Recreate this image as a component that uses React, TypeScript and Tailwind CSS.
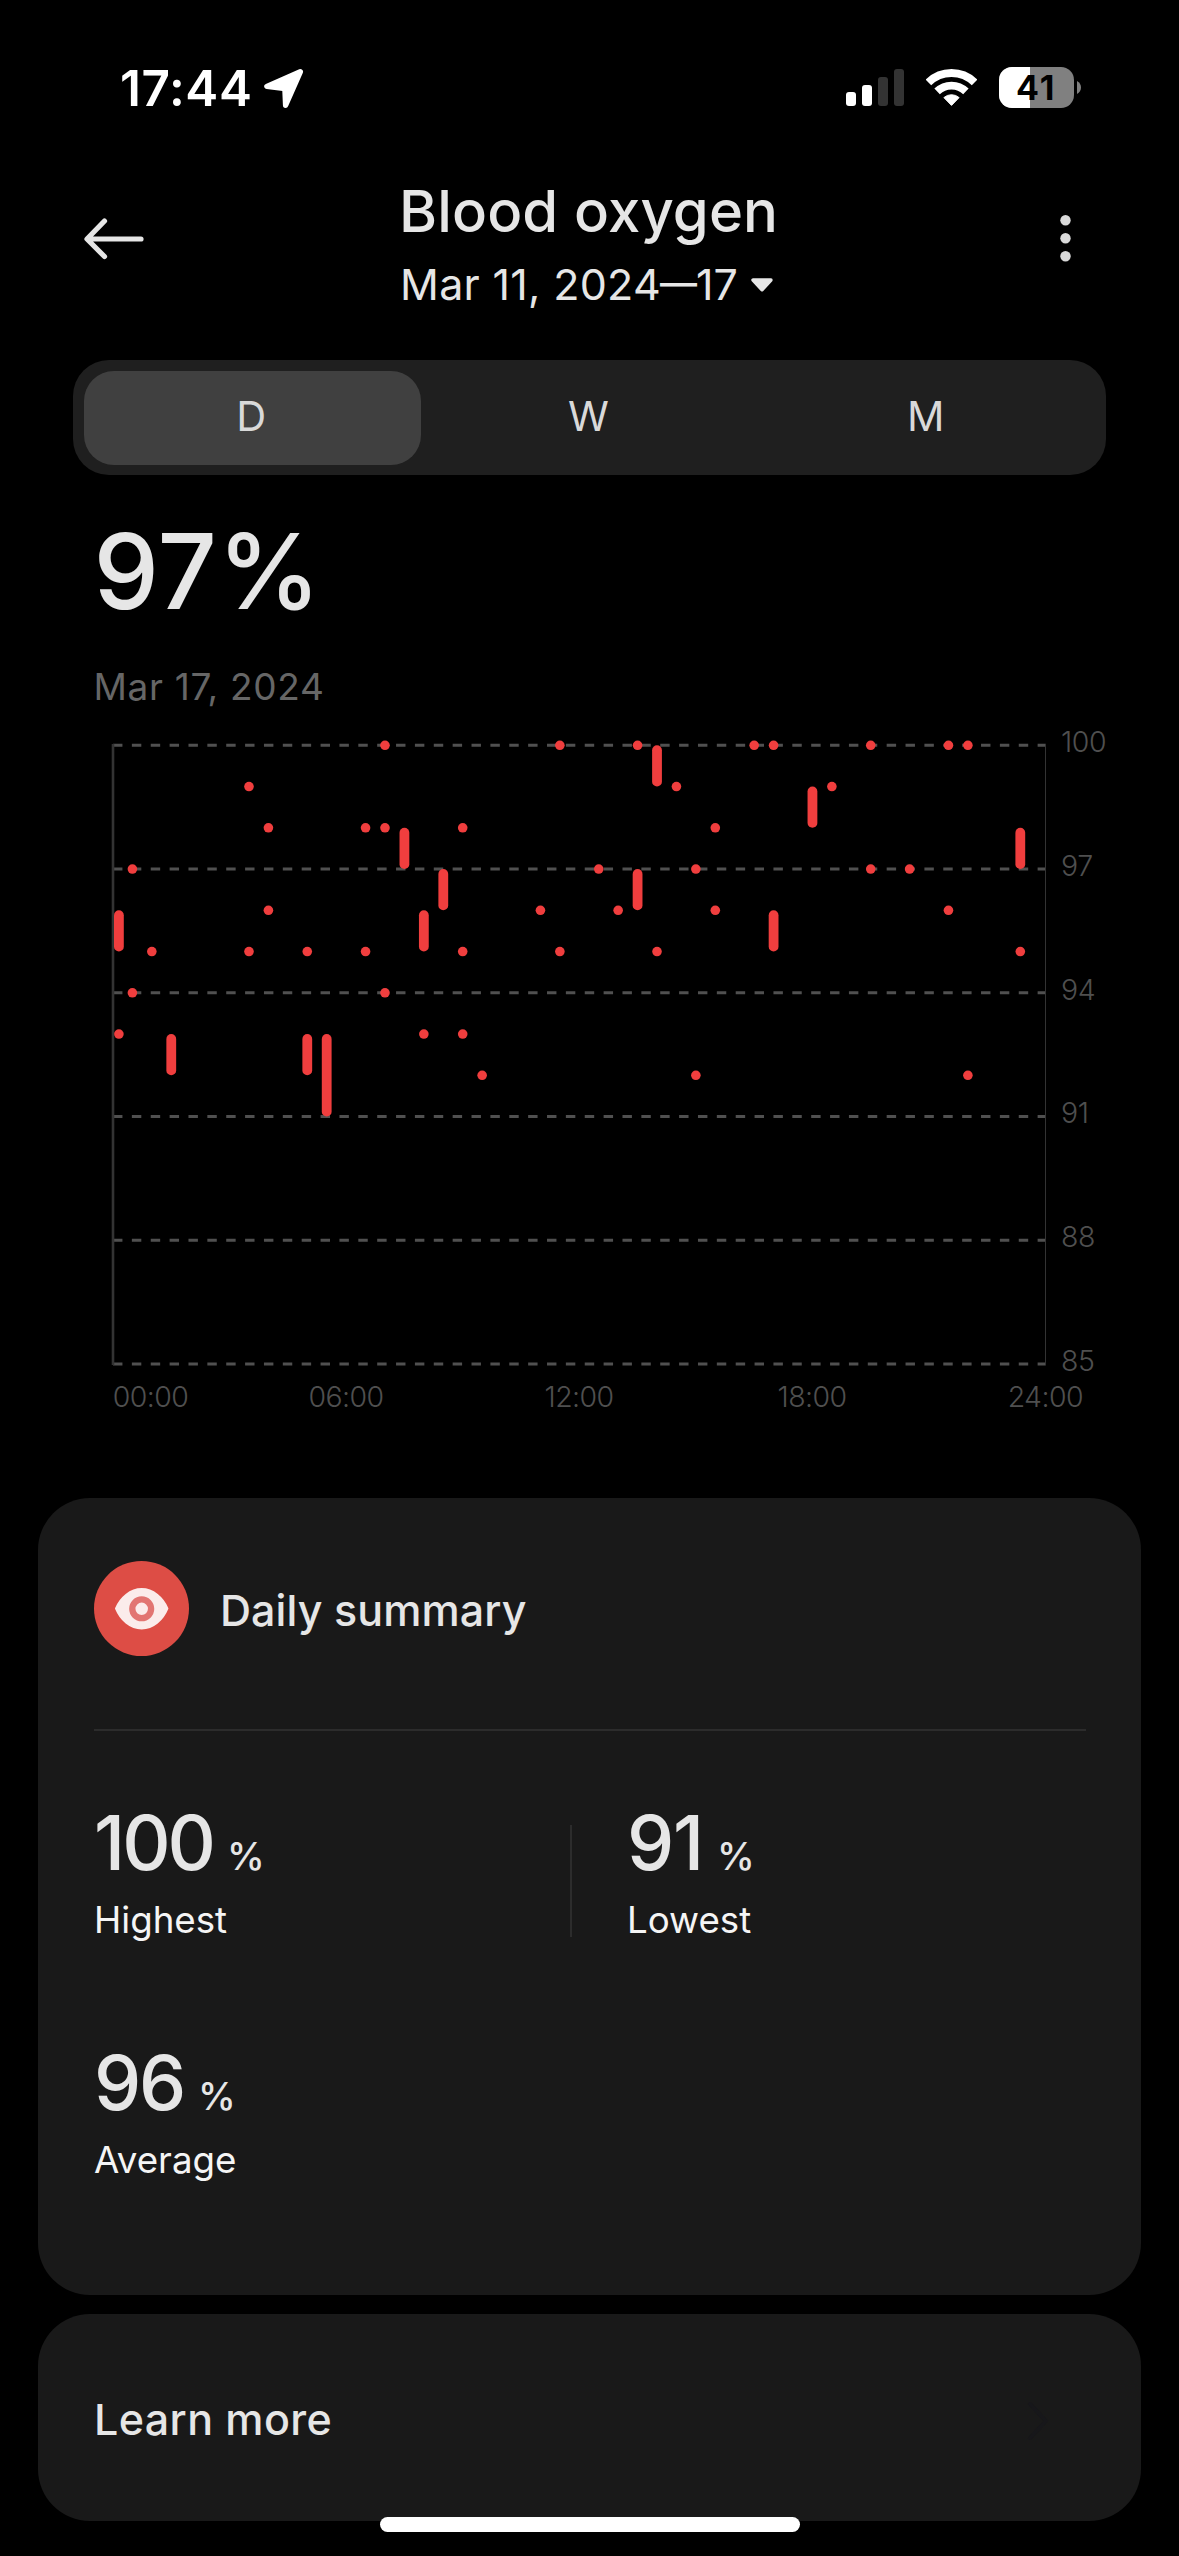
import React from "react";

const INTER = "font-['Inter','Liberation_Sans',sans-serif]";

/* ---------- status bar ---------- */

function LocationIcon() {
  return (
    <svg width="40" height="41" viewBox="0 0 40 41">
      <path
        d="M36.3 4.8 L2.9 19.4 L20.9 21.6 L21.6 38.2 Z"
        fill="#fff"
        stroke="#fff"
        strokeWidth="5.4"
        strokeLinejoin="round"
      />
    </svg>
  );
}

function SignalIcon() {
  return (
    <svg width="58" height="37" viewBox="0 0 58 37">
      <rect x="0" y="23" width="10" height="14" rx="3" fill="#fff" />
      <rect x="16" y="16" width="10" height="21" rx="3" fill="#fff" />
      <rect x="32" y="8" width="10" height="29" rx="3" fill="#333" />
      <rect x="48" y="0" width="10" height="37" rx="3" fill="#333" />
    </svg>
  );
}

function WifiIcon() {
  return (
    <svg width="51" height="37" viewBox="0 0 51 37">
      <path d="M2.4 13.5 A33 33 0 0 1 48.6 13.5" fill="none" stroke="#fff" strokeWidth="8" />
      <path d="M11.1 22.4 A20.6 20.6 0 0 1 39.9 22.4" fill="none" stroke="#fff" strokeWidth="7.8" />
      <path d="M25.5 36.4 L17.9 28.6 A11.5 11.5 0 0 1 33.1 28.6 Z" fill="#fff" stroke="#fff" strokeWidth="1" strokeLinejoin="round" />
    </svg>
  );
}

function BatteryIcon() {
  return (
    <svg width="82" height="41" viewBox="0 0 82 41">
      <clipPath id="battery">
        <rect width="75" height="41" rx="13" />
      </clipPath>
      <g clipPath="url(#battery)">
        <rect width="75" height="41" fill="#808080" />
        <rect width="31" height="41" fill="#fff" />
      </g>
      <path d="M78 14 C80.6 15.4 82 17.6 82 20.5 S80.6 25.6 78 27 Z" fill="#808080" />
      <text x="17" y="33" className="font-['Inter',sans-serif] text-[34px] font-bold" letterSpacing="2" fill="#000">
        41
      </text>
    </svg>
  );
}

function StatusBar() {
  return (
    <div className="flex h-[175px] items-center pl-[120px] pr-[98px] text-white">
      <div className="pt-px text-[49.5px] font-semibold leading-[49px] tracking-[0.6px]">17:44</div>
      <div className="ml-[11.5px]">
        <LocationIcon />
      </div>
      <div className="ml-auto flex items-center">
        <SignalIcon />
        <div className="ml-[22px] mr-[22px]">
          <WifiIcon />
        </div>
        <BatteryIcon />
      </div>
    </div>
  );
}

/* ---------- header ---------- */

function Header() {
  return (
    <div className="flex h-[185px] items-start pl-[84px] pr-[108px] text-[#e6e6e6]">
      <svg className="mt-[43px]" width="60" height="42" viewBox="0 0 60 42">
        <path
          d="M57 21 H3.5 M20.5 3 L3 21 L20.5 38.5"
          fill="none"
          stroke="#e6e6e6"
          strokeWidth="5.2"
          strokeLinecap="round"
          strokeLinejoin="round"
        />
      </svg>
      <div className="ml-[255px] flex flex-col">
        <h1 className="text-[58px] font-medium leading-[73px] tracking-[0.15px]">Blood oxygen</h1>
        <div className="flex items-center pl-px text-[43px] leading-[73px]">
          <span className="tracking-[0.3px]">Mar 11, 2024</span>
          <span className="-ml-px -mr-px pb-[3px] text-[37px] font-medium leading-[70px]">—</span>
          <span>17</span>
          <svg className="ml-[13px]" width="22" height="14" viewBox="0 0 22 14">
            <path d="M2 2 H20 L11 11.8 Z" fill="#e6e6e6" stroke="#e6e6e6" strokeWidth="3.4" strokeLinejoin="round" />
          </svg>
        </div>
      </div>
      <svg className="ml-auto mt-[39px]" width="11" height="48" viewBox="0 0 11 48">
        <circle cx="5.5" cy="6.2" r="5.2" fill="#d9d9d9" />
        <circle cx="5.5" cy="24.2" r="5.2" fill="#d9d9d9" />
        <circle cx="5.5" cy="42.2" r="5.2" fill="#d9d9d9" />
      </svg>
    </div>
  );
}

function Tabs() {
  const base = "flex items-center justify-center rounded-[30px] pb-[3px] pr-[2px] text-[41.5px] text-[#d9d9d9]";
  return (
    <div className="ml-[73px] grid h-[115px] w-[1033px] grid-cols-3 rounded-[36px] bg-[#1f1f1f] p-[10.5px]">
      <div className={`${base} bg-[#404040]`}>D</div>
      <div className={base}>W</div>
      <div className={base}>M</div>
    </div>
  );
}

/* ---------- chart ---------- */

const LEFT = 113;
const RIGHT = 1045.7;
const yOf = (v: number) => 745.3 + (100 - v) * 41.25;

// Half-hour slots: single readings are dots, [high, low] pairs are ranges.
const readings: { slot: number; dots?: number[]; range?: [number, number] }[] = [
  { slot: 0, dots: [93], range: [96, 95] },
  { slot: 1, dots: [97, 94] },
  { slot: 2, dots: [95] },
  { slot: 3, range: [93, 92] },
  { slot: 7, dots: [99, 95] },
  { slot: 8, dots: [98, 96] },
  { slot: 10, dots: [95], range: [93, 92] },
  { slot: 11, range: [93, 91] },
  { slot: 13, dots: [98, 95] },
  { slot: 14, dots: [100, 98, 94] },
  { slot: 15, range: [98, 97] },
  { slot: 16, dots: [93], range: [96, 95] },
  { slot: 17, range: [97, 96] },
  { slot: 18, dots: [98, 95, 93] },
  { slot: 19, dots: [92] },
  { slot: 22, dots: [96] },
  { slot: 23, dots: [100, 95] },
  { slot: 25, dots: [97] },
  { slot: 26, dots: [96] },
  { slot: 27, dots: [100], range: [97, 96] },
  { slot: 28, dots: [95], range: [100, 99] },
  { slot: 29, dots: [99] },
  { slot: 30, dots: [97, 92] },
  { slot: 31, dots: [98, 96] },
  { slot: 33, dots: [100] },
  { slot: 34, dots: [100], range: [96, 95] },
  { slot: 36, range: [99, 98] },
  { slot: 37, dots: [99] },
  { slot: 39, dots: [100, 97] },
  { slot: 41, dots: [97] },
  { slot: 43, dots: [100, 96] },
  { slot: 44, dots: [100, 92] },
  { slot: 47, dots: [95], range: [98, 97] },
];

function xOf(slot: number) {
  if (slot === 0) return 118.9;
  if (slot === 47) return 1020.3;
  return 132.4 + (slot - 1) * 19.43;
}

const hours: [string, number][] = [
  ["00:00", 150.6],
  ["06:00", 346],
  ["12:00", 579],
  ["18:00", 812],
  ["24:00", 1045.3],
];

function Chart() {
  return (
    <svg className="block shrink-0" width="1179" height="793" viewBox="0 705 1179 793">
      {[100, 97, 94, 91, 88, 85].map((v) => (
        <g key={v}>
          <line x1={LEFT} x2={RIGHT} y1={yOf(v)} y2={yOf(v)} stroke="#505050" strokeWidth="3" strokeDasharray="9.43 9.44" />
          <text
            x="1061"
            y={yOf(v) + 6.7}
            className="font-['Inter',sans-serif] text-[28.5px] font-light"
            letterSpacing="-0.4"
            fill="#4f4f4f"
          >
            {v}
          </text>
        </g>
      ))}
      <line x1={LEFT} x2={LEFT} y1="744" y2="1365" stroke="#333" strokeWidth="2.6" />
      <line x1={RIGHT - 0.2} x2={RIGHT - 0.2} y1="744" y2="1365" stroke="#333" strokeWidth="1" />
      {readings.map(({ slot, dots = [], range }) => (
        <g key={slot} fill="#f03e3e">
          {dots.map((v) => (
            <circle key={v} cx={xOf(slot)} cy={yOf(v)} r="4.8" />
          ))}
          {range && (
            <rect
              x={xOf(slot) - 4.9}
              y={yOf(range[0])}
              width="9.8"
              height={yOf(range[1]) - yOf(range[0])}
              rx="4.9"
            />
          )}
        </g>
      ))}
      {hours.map(([label, x]) => (
        <text
          key={label}
          x={x}
          y="1407.3"
          textAnchor="middle"
          className="font-['Inter',sans-serif] text-[28.5px] font-light"
          letterSpacing="-0.6"
          fill="#4f4f4f"
        >
          {label}
        </text>
      ))}
    </svg>
  );
}

/* ---------- cards ---------- */

function EyeBadge() {
  return (
    <svg width="95" height="95" viewBox="0 0 95 95">
      <circle cx="47.5" cy="47.5" r="47.5" fill="#dd4d45" />
      <path
        d="M22.5 47.5 C27 37 36.5 28.6 47.7 28.6 S68.4 37 72.9 47.5 C68.4 58.5 58.9 67 47.7 67 S27 58.5 22.5 47.5 Z"
        fill="#fbeceb"
        stroke="#fbeceb"
        strokeWidth="3"
        strokeLinejoin="round"
      />
      <circle cx="47.7" cy="47.8" r="9.4" fill="none" stroke="#e27572" strokeWidth="6.3" />
    </svg>
  );
}

function Stat({ value, label, tracking }: { value: string; label: string; tracking: string }) {
  return (
    <div>
      <div className="flex items-baseline gap-[14px] text-[#e6e6e6]">
        <span className={`text-[75px] font-medium leading-[76px] ${tracking}`}>{value}</span>
        <span className="text-[38px] font-medium leading-none">%</span>
      </div>
      <div className="mt-[20px] text-[36.7px] leading-[37px] text-[#f5f5f5]">{label}</div>
    </div>
  );
}

function SummaryCard() {
  return (
    <section className="ml-[38px] h-[797px] w-[1103px] shrink-0 rounded-[52px] bg-[#191919] pl-[56px] pr-[55px] pt-[63px]">
      <div className="flex items-center">
        <EyeBadge />
        <h2 className="ml-[31px] pt-[3px] text-[43px] font-medium leading-[50px] tracking-[0.08px] text-[#e6e6e6]">
          Daily summary
        </h2>
      </div>
      <div className="mt-[73px] h-[2px] bg-[#2c2c2c]" />
      <div className="mt-[74px] flex">
        <div className="w-[476px]">
          <Stat value="100" label="Highest" tracking="tracking-[-3px]" />
        </div>
        <div className="mr-[55px] mt-[20px] h-[112px] w-[2px] bg-[#2c2c2c]" />
        <Stat value="91" label="Lowest" tracking="tracking-[-1.2px]" />
      </div>
      <div className="mt-[107px]">
        <Stat value="96" label="Average" tracking="tracking-[-2.2px]" />
      </div>
    </section>
  );
}

function LearnMore() {
  return (
    <section className="ml-[38px] mt-[19px] flex h-[207px] w-[1103px] shrink-0 items-center justify-between rounded-[52px] bg-[#191919] pl-[56px] pr-[91px]">
      <span className="pt-[3px] text-[43px] font-medium leading-[50px] tracking-[0.4px] text-[#e6e6e6]">Learn more</span>
      <svg className="mt-[6px]" width="24" height="42" viewBox="0 0 24 42">
        <path d="M4 4 L20 21 L4 38" fill="none" stroke="#17171a" strokeWidth="4" strokeLinecap="round" strokeLinejoin="round" />
      </svg>
    </section>
  );
}

export default function App() {
  return (
    <main className={`relative flex h-[2556px] w-[1179px] flex-col overflow-hidden bg-black ${INTER}`}>
      <StatusBar />
      <Header />
      <Tabs />
      <div className="mt-[44px] pl-[93.5px]">
        <div className="text-[104px] font-medium leading-[104px] tracking-[0.6px] text-[#e6e6e6]">97%</div>
        <div className="mt-[45px] text-[37px] leading-[37px] tracking-[0.7px] text-[#666]">Mar 17, 2024</div>
      </div>
      <Chart />
      <SummaryCard />
      <LearnMore />
      <div className="absolute bottom-[24px] left-[380px] h-[15px] w-[420px] rounded-full bg-white" />
    </main>
  );
}
